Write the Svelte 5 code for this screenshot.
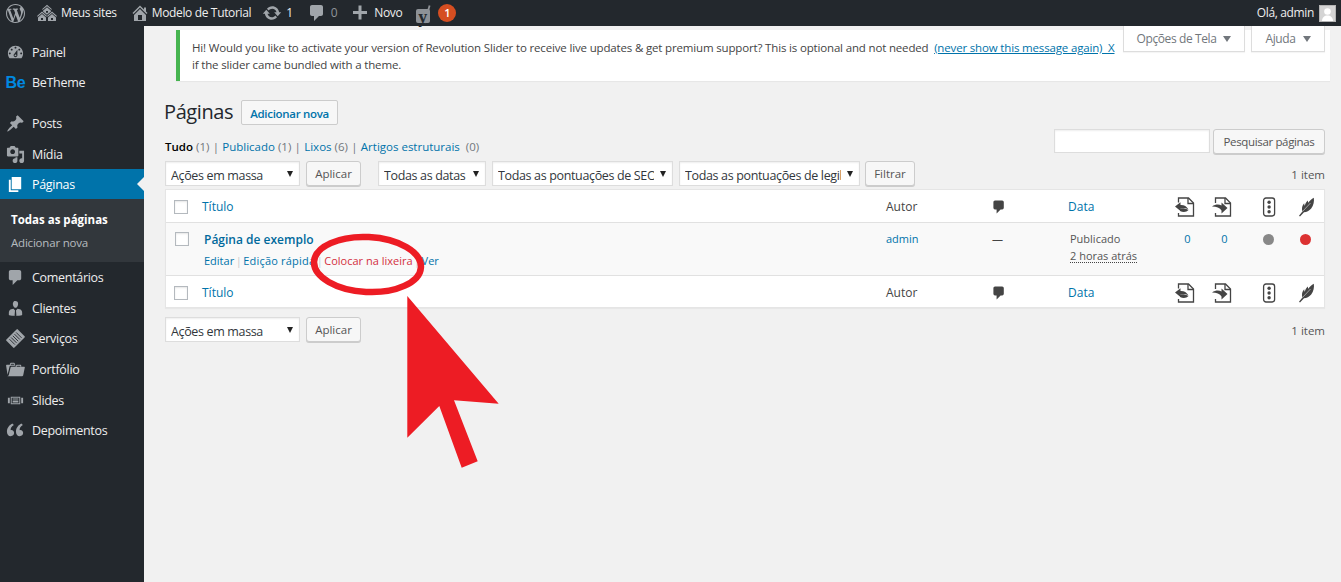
<script>
  const icons = {
    wp: "M20 10c0-5.51-4.49-10-10-10C4.48 0 0 4.49 0 10c0 5.52 4.48 10 10 10 5.51 0 10-4.48 10-10zM7.78 15.37L4.37 6.22c.55-.02 1.17-.08 1.17-.08.5-.06.44-1.13-.06-1.11 0 0-1.45.11-2.37.11-.18 0-.37 0-.58-.01C4.12 2.69 6.87 1.11 10 1.11c2.33 0 4.45.87 6.05 2.34-.68-.11-1.65.39-1.65 1.58 0 .74.45 1.36.9 2.1.35.61.55 1.36.55 2.46 0 1.49-1.4 5-1.4 5l-3.03-8.37c.54-.02.82-.17.82-.17.5-.05.44-1.25-.06-1.22 0 0-1.44.12-2.38.12-.87 0-2.33-.12-2.33-.12-.5-.03-.56 1.2-.06 1.22l.92.08 1.26 3.41zM17.41 10c.24-.64.74-1.87.43-4.25.7 1.29 1.05 2.71 1.05 4.25 0 3.29-1.73 6.24-4.4 7.78.97-2.59 1.94-5.2 2.92-7.78zM6.1 18.09C3.12 16.65 1.11 13.53 1.11 10c0-1.3.23-2.48.72-3.59C3.25 10.3 4.67 14.2 6.1 18.09zm4.03-6.63l2.58 6.98c-.86.29-1.76.45-2.71.45-.79 0-1.57-.11-2.29-.33.81-2.38 1.62-4.74 2.42-7.1z",
    sites: "M14.27 6.87L10 3.14 5.73 6.87 5 6.14l5-4.38 5 4.38zM14 8.42l-4.05 3.43L6 8.38v-.74l4-3.5 4 3.5v.78zM11 9.7V8H9v1.7h2zm-1.73 4.03L5 10 .73 13.73 0 13l5-4.38L10 13zm10 0L15 10l-4.27 3.73L10 13l5-4.38L20 13zM5 11l4 3.5V18H1v-3.5zm10 0l4 3.5V18h-8v-3.5zM6 17v-2H4v2h2zm10 0v-2h-2v2h2z",
    home: "M16 8.5l1.53 1.53-1.06 1.06L10 4.62l-6.47 6.47-1.06-1.06L10 2.5l4 4v-2h2v4zm-6-2.46l6 5.99V18H4v-5.97zM12 17v-5H8v5h4z",
    update: "M10.2 3.28c3.53 0 6.43 2.61 6.92 6h2.08l-3.5 4-3.5-4h2.32c-.45-1.97-2.21-3.45-4.32-3.45-1.45 0-2.73.71-3.54 1.78L4.95 5.66C6.23 4.2 8.11 3.28 10.2 3.28zm-.4 13.44c-3.52 0-6.43-2.61-6.92-6H.8l3.5-4c1.17 1.33 2.33 2.67 3.5 4H5.48c.45 1.97 2.21 3.45 4.32 3.45 1.45 0 2.73-.71 3.54-1.78l1.71 1.95c-1.28 1.46-3.15 2.38-5.25 2.38z",
    comment: "M5 2h9c1.1 0 2 .9 2 2v7c0 1.1-.9 2-2 2h-2l-5 5v-5H5c-1.1 0-2-.9-2-2V4c0-1.1.9-2 2-2z",
    plus: "M17 8v3h-5.5v5.5h-3V11H3V8h5.5V2.5h3V8z",
    dashboard: "M3.76 16h12.48c1.1-1.37 1.76-3.11 1.76-5 0-4.42-3.58-8-8-8s-8 3.58-8 8c0 1.89.66 3.63 1.76 5zM10 4c.55 0 1 .45 1 1s-.45 1-1 1-1-.45-1-1 .45-1 1-1zM6 6c.55 0 1 .45 1 1s-.45 1-1 1-1-.45-1-1 .45-1 1-1zm8 0c.55 0 1 .45 1 1s-.45 1-1 1-1-.45-1-1 .45-1 1-1zm-5.37 5.55L12 7v6c0 1.1-.9 2-2 2s-2-.9-2-2c0-.57.24-1.08.63-1.45zM4 10c.55 0 1 .45 1 1s-.45 1-1 1-1-.45-1-1 .45-1 1-1zm12 0c.55 0 1 .45 1 1s-.45 1-1 1-1-.45-1-1 .45-1 1-1zm-5 3c0-.55-.45-1-1-1s-1 .45-1 1 .45 1 1 1 1-.45 1-1z",
    post: "M10.44 3.02l1.82-1.82 6.36 6.35-1.83 1.82c-1.05-.68-2.48-.57-3.41.36l-.75.75c-.92.93-1.04 2.35-.35 3.41l-1.83 1.82-2.41-2.41-2.8 2.79c-.42.42-3.38 2.71-3.8 2.29s1.86-3.39 2.28-3.81l2.79-2.79L4.1 9.36l1.83-1.82c1.05.69 2.48.57 3.4-.36l.75-.75c.93-.92 1.05-2.35.36-3.41z",
    media: "M13 11V4c0-.55-.45-1-1-1h-1.67L9 1H5L3.67 3H2c-.55 0-1 .45-1 1v7c0 .55.45 1 1 1h10c.55 0 1-.45 1-1zM7 4.5c1.38 0 2.5 1.12 2.5 2.5S8.38 9.5 7 9.5 4.5 8.38 4.5 7 5.62 4.5 7 4.5zM14 6h5v10.5c0 1.38-1.12 2.5-2.5 2.5S14 17.88 14 16.5s1.12-2.5 2.5-2.5c.17 0 .34.02.5.05V9h-3V6zm-4 8.05V13h2v3.5c0 1.38-1.12 2.5-2.5 2.5S7 17.88 7 16.5 8.12 14 9.5 14c.17 0 .34.02.5.05z",
    page: "M6 15V2h10v13H6zm-1 1h8v2H3V5h2v11z",
    man: "M7.3 6l-.03-.19c-.04-.37-.05-.73-.03-1.08.02-.36.1-.71.25-1.04.14-.32.31-.61.52-.86s.49-.46.83-.6c.34-.15.72-.23 1.13-.23.69 0 1.26.2 1.71.59s.76.87.91 1.44.18 1.16.09 1.78l-.03.19c-.01.09-.05.25-.11.48-.05.24-.12.47-.2.69-.08.21-.19.45-.34.72-.14.27-.3.49-.47.69-.18.19-.4.34-.67.48-.27.13-.55.19-.86.19s-.59-.06-.87-.19c-.26-.13-.49-.29-.67-.5-.18-.2-.34-.42-.49-.66-.15-.25-.26-.49-.34-.73-.09-.25-.16-.47-.21-.67-.06-.21-.1-.37-.12-.5zM3 14.4c0-.7.1-1.44.52-2.14.42-.71 1.02-1.12 1.84-1.45.83-.32 1.66-.49 2.56-.53L9.5 12 9 17.8c-.5 0-1.2-.05-1.9-.13-.75-.07-1.4-.17-1.98-.27-.58-.11-1.08-.23-1.56-.34L3 16.87zm14 0c0-.7-.1-1.44-.52-2.14-.42-.71-1.02-1.12-1.84-1.45-.83-.32-1.66-.49-2.56-.53L10.500 12l.5 5.8c.5 0 1.2-.05 1.900-.13.75-.07 1.400-.17 1.980-.27.58-.11 1.080-.23 1.560-.34l.56-.19z",
    folder: "M4 5H.78c-.37 0-.74.32-.69.84l1.56 9.99S3.5 8.47 3.86 6.7c.11-.53.61-.7.98-.7H10s-.7-2.08-.77-2.31C9.11 3.25 8.89 3 8.45 3H5.14c-.36 0-.7.23-.8.64C4.25 4.04 4 5 4 5zm4.88 0h-4s.42-1 .87-1h2.13c.48 0 1 1 1 1zM2.67 16.25c-.31.47-.76.75-1.26.75h15.73c.54 0 .92-.31 1.03-.83.44-2.19 1.68-8.44 1.68-8.44.07-.5-.3-.73-.62-.73H16V5.53c0-.16-.26-.53-.66-.53h-3.76c-.52 0-.87.58-.87.58L10 7H5.59c-.32 0-.63.19-.69.5 0 0-1.59 6.7-1.72 7.33-.07.37-.22.99-.51 1.42zM15.38 7H11s.58-1 1.13-1h2.29c.71 0 .96 1 .96 1z",
    slides: "M5 14V6h10v8H5zm-3-1V7h2v6H2zm4-6v6h8V7H6zm10 0h2v6h-2V7zm-3 2V8H7v1h6zm0 3v-2H7v2h6z",
    quote: "M8.54 12.74c0-.87-.24-1.61-.72-2.22-.73-.92-2.14-1.03-2.96-.85-.34-1.93 1.3-4.39 3.42-5.45L6.65 2.5C3.45 4.03.71 7.46 1.01 11.5c.18 2.5 1.5 4.5 3.86 4.5 2.18 0 3.67-1.62 3.67-3.26zm9.5 0c0-.87-.25-1.61-.73-2.22-.72-.92-2.14-1.03-2.96-.85-.34-1.93 1.3-4.39 3.42-5.45L16.15 2.5c-3.2 1.53-5.94 4.96-5.64 9 .18 2.5 1.5 4.5 3.86 4.5 2.18 0 3.67-1.62 3.67-3.26z"
  };
  const topMenu = [
    { label: "Painel", icon: "dashboard" },
    { label: "BeTheme", be: true }
  ];
  const midMenu = [
    { label: "Posts", icon: "post" },
    { label: "Mídia", icon: "media" }
  ];
  const lowMenu = [
    { label: "Comentários", icon: "comment" },
    { label: "Clientes", icon: "man" },
    { label: "Serviços", list: true },
    { label: "Portfólio", icon: "folder" },
    { label: "Slides", icon: "slides" },
    { label: "Depoimentos", icon: "quote" }
  ];
</script>

{#snippet ico(name, cls = "")}
  <svg class={"ico " + cls} viewBox="0 0 20 20" aria-hidden="true"><path d={icons[name]} /></svg>
{/snippet}

{#snippet menuRow(m)}
  <div class="mi">
    <span class="mi-ic">
      {#if m.be}
        <span class="be">Be</span>
      {:else if m.list}
        <svg class="ico menu-ic" viewBox="0 0 20 20" aria-hidden="true">
          <g transform="rotate(45 10 10)">
            <rect x="4" y="1.500" width="12" height="17" rx="1" />
            <path class="list-lines" d="M6 5h8M6 7.500h8M6 10h8M6 12.500h8M6 15h8" />
          </g>
        </svg>
      {:else}
        {@render ico(m.icon, "menu-ic")}
      {/if}
    </span>
    <span>{m.label}</span>
  </div>
{/snippet}

{#snippet cols()}
  <span class="hd-link c-title">Título</span>
  <span class="c-author">Autor</span>
  <span class="c-com">{@render ico("comment", "th-com")}</span>
  <span class="hd-link c-date">Data</span>
  <span class="c-i">
    <svg class="th" viewBox="0 0 20 20"><path class="pg" d="M3.500 5.500V1h10l5 5v13h-15v-3" /><path class="pg" d="M13 1v5.500h5.500" /><path d="M0 9.500l5.500-4.300v2.800c3.500-.2 6 1.200 8 4.500-2.500-1.300-5-1.600-8-1.300v2.800z" /><path d="M5 11.500c3-.4 6 0 8.500 1.500-2 2.300-5.500 2.500-8.500 1z" /></svg>
  </span>
  <span class="c-i">
    <svg class="th" viewBox="0 0 20 20"><path class="pg" d="M3.500 6V1h10l5 5v13h-15v-3" /><path class="pg" d="M13 1v5.500h5.500" /><path d="M0 9.500c3.500-2.500 7-2.500 9.500-1V5.500l6 5.500-6 5.500v-3c-1.500-2.800-5-4-9.500-4z" /></svg>
  </span>
  <span class="c-i c-third">
    <svg class="th" viewBox="0 0 20 20"><rect class="pg" x="4.600" y="1" width="11" height="18" rx="2.400" /><circle cx="10.100" cy="5.200" r="1.700" /><circle cx="10.100" cy="10" r="1.700" /><circle cx="10.100" cy="14.800" r="1.700" /></svg>
  </span>
  <span class="c-i">
    <svg class="th" viewBox="0 0 20 20"><path d="M17.800.8c.6 3.600-.2 7.600-2.600 10.600-2 2.400-4.600 3.600-7.200 3.800L4 19.400l-1-.6 3.400-4.400c-1-2.800-.2-6 1.800-8.200 0 1.200.2 2 .6 2.600.4-2.400 1.600-4.200 3.200-5.400-.2 1 0 1.800.4 2.400C13.600 3.800 15.600 2 17.800.8z" /><path class="vein" d="M6.500 14.500L14.500 6" /></svg>
  </span>
{/snippet}

<div class="page">
  <header class="bar">
    <div class="bar-group">
      <span class="b wp">{@render ico("wp", "bar-ic wp-ic")}</span>
      <span class="b sites">{@render ico("sites", "bar-ic")}<span>Meus sites</span></span>
      <span class="b home">{@render ico("home", "bar-ic")}<span>Modelo de Tutorial</span></span>
      <span class="b upd">{@render ico("update", "bar-ic")}<span>1</span></span>
      <span class="b com">{@render ico("comment", "bar-ic")}<span class="dim">0</span></span>
      <span class="b new">{@render ico("plus", "bar-ic")}<span>Novo</span></span>
      <span class="b yoast">
        <svg class="yo" viewBox="0 0 16 20" aria-hidden="true"><rect x="0" y="5" width="14" height="14" rx="2" /><path class="yo-s" d="M13.600 1.500L8.500 19" /></svg>
        <span class="yo-y">y</span>
        <span class="count">1</span>
      </span>
    </div>
    <div class="bar-user">
      <span>Olá, admin</span>
      <svg class="avatar" viewBox="0 0 17 17" aria-hidden="true"><rect width="17" height="17" fill="#b4b4b4" /><rect x="1" y="1" width="15" height="15" fill="#d4d4d4" /><circle cx="8.500" cy="6.500" r="3.300" fill="#fff" /><path d="M3 16c0-3.500 2.500-5.500 5.500-5.500S14 12.500 14 16z" fill="#fff" /></svg>
    </div>
  </header>

  <div class="body">
    <nav class="side">
      <div class="menu-top">
        {#each topMenu as m}{@render menuRow(m)}{/each}
      </div>
      <div class="menu-mid">
        {#each midMenu as m}{@render menuRow(m)}{/each}
      </div>
      <div class="mi current">
        <span class="mi-ic">{@render ico("page", "menu-ic")}</span>
        <span>Páginas</span>
        <span class="notch"></span>
      </div>
      <div class="submenu">
        <div class="sub-on">Todas as páginas</div>
        <div class="sub-off">Adicionar nova</div>
      </div>
      <div class="menu-low">
        {#each lowMenu as m}{@render menuRow(m)}{/each}
      </div>
    </nav>

    <main class="main">
      <div class="tab tab-opts">Opções de Tela<span class="tri"></span></div>
      <div class="tab tab-help">Ajuda<span class="tri"></span></div>

      <div class="notice">
        <p>Hi! Would you like to activate your version of Revolution Slider to receive live updates &amp; get premium support? This is optional and not needed&nbsp; <span class="u">(never show this message again)&nbsp; X</span></p>
        <p>if the slider came bundled with a theme.</p>
      </div>

      <div class="title-row">
        <h1>Páginas</h1>
        <span class="add">Adicionar nova</span>
      </div>

      <div class="filters-row">
        <div class="subsub">
          <b>Tudo</b>&nbsp;<span class="n">(1)</span><span class="sep">|</span><span class="lnk">Publicado</span>&nbsp;<span class="n">(1)</span><span class="sep">|</span><span class="lnk">Lixos</span>&nbsp;<span class="n">(6)</span><span class="sep">|</span><span class="lnk">Artigos estruturais</span>&nbsp;<span class="n">&nbsp;(0)</span>
        </div>
        <div class="search">
          <span class="search-in"></span>
          <span class="btn search-btn">Pesquisar páginas</span>
        </div>
      </div>

      <div class="nav-row">
        <span class="sel w135"><span class="sel-t">Ações em massa</span></span>
        <span class="btn apply">Aplicar</span>
        <span class="sel w108"><span class="sel-t">Todas as datas</span></span>
        <span class="sel w180"><span class="sel-t">Todas as pontuações de SEO</span></span>
        <span class="sel w180"><span class="sel-t">Todas as pontuações de legibilidade</span></span>
        <span class="btn filt">Filtrar</span>
        <span class="count-r">1 item</span>
      </div>

      <div class="table">
        <div class="row head">
          <span class="cb-cell"><span class="cb"></span></span>
          {@render cols()}
        </div>
        <div class="row data">
          <span class="cb-cell"><span class="cb cb-row"></span></span>
          <div class="c-title d-title">
            <div class="pname">Página de exemplo</div>
            <div class="acts"><span class="lnk">Editar</span><span class="asep">|</span><span class="lnk wide">Edição rápida</span><span class="asep">|</span><span class="trash">Colocar na lixeira</span><span class="asep">|</span><span class="lnk">Ver</span></div>
          </div>
          <span class="c-author lnk d">admin</span>
          <span class="c-com d dash">—</span>
          <div class="c-date d d-date">
            <div>Publicado</div>
            <div class="ago">2 horas atrás</div>
          </div>
          <span class="c-i d lnk num">0</span>
          <span class="c-i d lnk num">0</span>
          <span class="c-i c-third d"><span class="dot gray"></span></span>
          <span class="c-i d"><span class="dot red"></span></span>
        </div>
        <div class="row foot">
          <span class="cb-cell"><span class="cb"></span></span>
          {@render cols()}
        </div>
      </div>

      <div class="nav-row bottom">
        <span class="sel w135"><span class="sel-t">Ações em massa</span></span>
        <span class="btn apply">Aplicar</span>
        <span class="count-r">1 item</span>
      </div>
    </main>
  </div>

  <svg class="overlay" viewBox="0 0 1341 582" aria-hidden="true">
    <ellipse cx="367.500" cy="264.500" rx="53.500" ry="27.500" transform="rotate(3 367.500 264.500)" fill="none" stroke="#ed1c24" stroke-width="6.500" />
    <polygon points="407.300,296 498.700,403.700 454,400.300 477.700,461.300 461.700,467.700 439.300,406 407.300,437.700" fill="#ed1c24" />
  </svg>
</div>

<style>
  :global(body) { margin: 0; background: #f1f1f1; }
  .page {
    position: relative;
    width: 1341px;
    height: 582px;
    overflow: hidden;
    background: #f1f1f1;
    font-family: "Open Sans", sans-serif;
    font-size: 13px;
    color: #444;
  }
  .ico { display: block; fill: currentColor; flex: none; }

  .bar {
    height: 26px;
    background: #23282d;
    color: #eee;
    display: flex;
    justify-content: space-between;
    align-items: center;
    font-size: 12px;
    letter-spacing: -0.35px;
    line-height: 26px;
  }
  .bar-group { display: flex; align-items: center; }
  .b { display: flex; align-items: center; }
  .bar-ic { width: 20px; height: 20px; color: #a0a5aa; }
  .wp { margin-left: 6px; }
  .wp-ic { width: 19px; height: 19px; }
  .sites { margin-left: 12px; gap: 4px; }
  .home { margin-left: 13px; gap: 2px; }
  .upd { margin-left: 11px; gap: 4px; }
  .com { margin-left: 14px; gap: 4px; }
  .dim { color: #8f9499; }
  .new { margin-left: 13px; gap: 4px; }
  .yoast { margin-left: 14px; position: relative; }
  .yo { width: 16px; height: 20px; fill: #8d9196; margin-top: 1px; }
  .yo-s { fill: none; stroke: #8d9196; stroke-width: 1.800; }
  .yo-y {
    position: absolute;
    left: 2px;
    top: 2px;
    font-family: "Liberation Serif", serif;
    font-size: 18px;
    line-height: 24px;
    font-weight: 700;
    color: #23282d;
  }
  .count {
    margin-left: 6px;
    width: 18px;
    height: 18px;
    line-height: 18px;
    border-radius: 50%;
    background: #d54e21;
    color: #fff;
    font-size: 11px;
    font-weight: 600;
    text-align: center;
  }
  .bar-user { display: flex; align-items: center; gap: 5px; margin-right: 5px; }
  .avatar { width: 17px; height: 17px; display: block; }

  .body { display: flex; height: 556px; }
  .side { width: 144px; flex: none; background: #23282d; color: #eee; padding-top: 11px; }
  .mi { display: flex; align-items: center; height: 30.600px; position: relative; font-size: 12.500px; letter-spacing: -0.3px; }
  .mi-ic { width: 32px; display: flex; justify-content: center; flex: none; color: #a0a5aa; }
  .menu-ic { width: 19px; height: 19px; margin-left: -1px; }
  .list-lines { fill: none; stroke: #23282d; stroke-width: 0.900; }
  .be {
    font-family: "Liberation Sans", sans-serif;
    font-weight: 700;
    font-size: 16px;
    line-height: 18px;
    color: #0089e0;
    margin-left: -1px;
    letter-spacing: -0.3px;
  }
  .menu-mid { margin-top: 10px; }
  .current { background: #0073aa; color: #fff; height: 30px; }
  .current .mi-ic { color: #fff; }
  .notch {
    position: absolute;
    right: 0;
    top: 8px;
    border: 7px solid transparent;
    border-right-color: #f1f1f1;
    border-left-width: 0;
  }
  .submenu { background: #32373c; height: 63px; padding-top: 13px; box-sizing: border-box; font-size: 11.500px; }
  .sub-on { color: #fff; font-weight: 700; padding-left: 11px; line-height: 16px; }
  .sub-off { color: rgba(240, 245, 250, 0.7); padding-left: 11px; line-height: 16px; margin-top: 7px; letter-spacing: -0.2px; }

  .main { flex: 1; position: relative; padding: 4px 16px 0 21px; box-sizing: border-box; min-width: 0; }

  .tab {
    position: absolute;
    top: 0;
    height: 26px;
    box-sizing: border-box;
    background: #fff;
    border: 1px solid #ddd;
    border-top: 0;
    box-shadow: 0 1px 1px rgba(0, 0, 0, 0.04);
    color: #72777c;
    font-size: 12px;
    letter-spacing: -0.4px;
    line-height: 25px;
    display: flex;
    justify-content: center;
    align-items: center;
    gap: 7px;
    z-index: 2;
  }
  .tab-opts { left: 979px; width: 122px; }
  .tab-help { left: 1107px; width: 74px; }
  .tri {
    width: 0;
    height: 0;
    border: 4px solid transparent;
    border-top: 6px solid #72777c;
    border-bottom: 0;
  }

  .notice {
    margin: 0 -5px 0 11px;
    height: 51px;
    box-sizing: border-box;
    background: #fff;
    border-left: 4px solid #46b450;
    box-shadow: 0 1px 1px rgba(0, 0, 0, 0.04);
    padding: 9px 12px 0;
    font-size: 11.500px;
    letter-spacing: -0.16px;
    line-height: 17px;
    white-space: nowrap;
  }
  .notice p { margin: 0; }
  .u { color: #0073aa; text-decoration: underline; }

  .title-row { display: flex; align-items: center; margin-top: 15px; height: 32px; margin-left: -1px; }
  h1 { margin: 0; font-weight: 400; font-size: 20px; letter-spacing: -0.4px; color: #23282d; line-height: 32px; }
  .add {
    margin-left: 8px;
    height: 25px;
    box-sizing: border-box;
    border: 1px solid #ccc;
    border-radius: 2px;
    background: #f7f7f7;
    color: #0073aa;
    font-size: 11.500px;
    letter-spacing: -0.3px;
    font-weight: 600;
    line-height: 25px;
    padding: 0 8px;
  }

  .filters-row { display: flex; justify-content: space-between; align-items: flex-start; margin-top: 1px; height: 29px; }
  .subsub { font-size: 11.500px; line-height: 18px; padding-top: 9px; white-space: nowrap; }
  .subsub b { font-weight: 600; color: #000; }
  .n { color: #72777c; }
  .sep { color: #72777c; margin: 0 3.300px; }
  .lnk { color: #0073aa; }
  .wide { letter-spacing: 0.2px; }
  .search { display: flex; gap: 3px; }
  .search-in { width: 156px; height: 24px; box-sizing: border-box; background: #fff; border: 1px solid #ddd; box-shadow: inset 0 1px 2px rgba(0,0,0,.07); }
  .btn {
    box-sizing: border-box;
    display: inline-block;
    height: 25px;
    line-height: 24px;
    border: 1px solid #ccc;
    border-radius: 3px;
    background: #f7f7f7;
    box-shadow: 0 1px 0 #ccc;
    color: #555;
    font-size: 11.500px;
    text-align: center;
  }
  .search-btn { width: 112px; letter-spacing: -0.35px; }

  .nav-row { display: flex; align-items: flex-start; margin-top: 3px; height: 28px; }
  .sel {
    position: relative;
    box-sizing: border-box;
    height: 25px;
    background: #fff;
    border: 1px solid #ddd;
    box-shadow: inset 0 1px 2px rgba(0,0,0,.07);
    color: #32373c;
    font-size: 12.500px;
    letter-spacing: -0.35px;
    line-height: 25px;
    padding-left: 5px;
    margin-right: 6px;
  }
  .sel::after {
    content: "";
    position: absolute;
    right: 6px;
    top: 9px;
    border: 3.500px solid transparent;
    border-top: 6px solid #222;
    border-bottom: 0;
  }
  .sel-t { display: block; overflow: hidden; white-space: nowrap; width: calc(100% - 18px); padding-top: 1px; }
  .w135 { width: 135px; }
  .w108 { width: 108px; }
  .w180 { width: 181px; }
  .apply { width: 55px; margin-right: 17px; }
  .filt { width: 50px; margin-left: -1px; }
  .count-r { margin-left: auto; font-size: 11.500px; color: #555; line-height: 27px; }

  .table {
    background: #fff;
    border: 1px solid #e5e5e5;
    box-shadow: 0 1px 1px rgba(0,0,0,.04);
    box-sizing: border-box;
    width: 1160px;
    height: 119px;
  }
  .row {
    display: grid;
    grid-template-columns: 36px 684px 100px 82px 98px 37px 37px 47px 37px;
    align-items: center;
  }
  .head, .foot { height: 32px; font-size: 12px; padding-top: 1px; box-sizing: border-box; }
  .head { border-bottom: 1px solid #e1e1e1; height: 33px; }
  .data { height: 53px; background: #f9f9f9; border-bottom: 1px solid #e1e1e1; align-items: start; font-size: 11px; box-sizing: border-box; }
  .cb-cell { display: flex; padding-left: 8px; }
  .cb { width: 14px; height: 14px; box-sizing: border-box; background: #fff; border: 1px solid #b4b9be; box-shadow: inset 0 1px 2px rgba(0,0,0,.1); }
  .cb-row { margin: 9px 0 0 1px; }
  .hd-link { color: #0073aa; }
  .c-com { display: flex; justify-content: flex-start; padding-left: 5px; }
  .th-com { width: 16px; height: 16px; color: #444; }
  .c-i { display: flex; justify-content: center; text-align: center; }
  .c-third { padding-left: 10px; }
  .th { width: 20px; height: 20px; display: block; fill: #444; }
  .th .pg { fill: none; stroke: #444; stroke-width: 1.300; }
  .th .vein { fill: none; stroke: #fff; stroke-width: 0.500; }
  .d { padding-top: 8px; line-height: 16px; }
  .num { padding-left: 6px; }
  .d-title { padding: 8px 0 0 2px; }
  .pname { color: #00699c; font-weight: 600; font-size: 12px; line-height: 18px; }
  .acts { margin-top: 4px; font-size: 11px; line-height: 16px; white-space: nowrap; }
  .asep { color: #ccc; margin: 0 1.500px; }
  .trash { color: #d4303e; }
  .dash { padding-left: 6px; }
  .d-date { padding-left: 2px; color: #555; }
  .ago { display: inline-block; margin-top: 2px; border-bottom: 1px dotted #444; line-height: 13px; }
  .dot { width: 11px; height: 11px; border-radius: 50%; display: block; margin-top: 3px; }
  .gray { background: #888; }
  .red { background: #dc3232; }
  .bottom { margin-top: 9px; }

  .overlay { position: absolute; left: 0; top: 0; width: 1341px; height: 582px; pointer-events: none; }
</style>
